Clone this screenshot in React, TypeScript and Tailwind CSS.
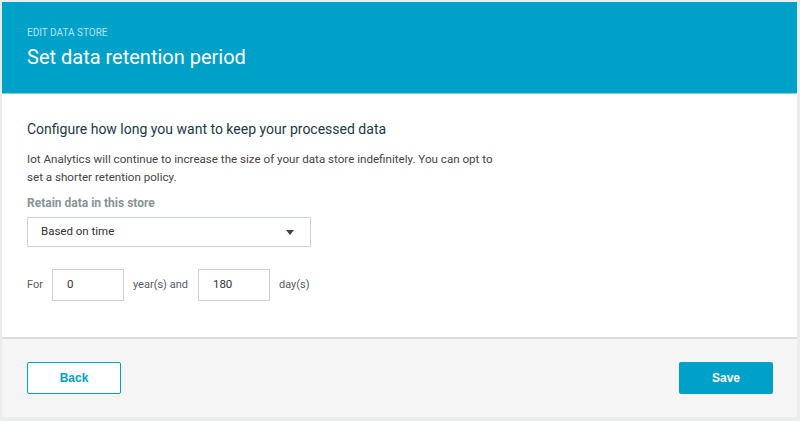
import React from 'react';

const sans = { fontFamily: 'Roboto, "Noto Sans", sans-serif' };

export default function App() {
  return (
    <div className="h-[421px] w-[800px] bg-[#eaeded] pl-[2px] pr-[3px] pt-[2px] pb-[4px]" style={sans}>
      <div className="flex h-full flex-col bg-white">
        {/* header */}
        <div className="h-[92px] border-b border-[#7fd3e6] bg-[#00a1c9] px-[25px] pt-[25px]">
          <div className="text-[10px] uppercase leading-[12px] text-[#b3e4f0]">Edit data store</div>
          <h1 className="mt-[5px] text-[20px] leading-[26px] text-white">Set data retention period</h1>
        </div>

        {/* body */}
        <div className="flex-1 px-[25px] pt-[25px]">
          <h2 className="text-[14px] leading-[20px] text-[#1b3a45]">
            Configure how long you want to keep your processed data
          </h2>
          <p className="mt-[11px] w-[475px] text-[11.6px] leading-[18px] text-[#444]">
            Iot Analytics will continue to increase the size of your data store indefinitely. You can opt to
            set a shorter retention policy.
          </p>
          <div className="mt-[10px] text-[12px] font-bold leading-[14px] text-[#879596]">Retain data in this store</div>
          <div className="mt-[7px] flex h-[30px] w-[284px] items-center justify-between border border-[#ccd3d3] px-[13px] text-[11.5px] text-[#333]">
            <span>Based on time</span>
            <svg width="8" height="5" viewBox="0 0 8 5" className="mr-[3px]">
              <path d="M0 0h8L4 5z" fill="#444" />
            </svg>
          </div>
          <div className="mt-[22px] flex items-center text-[11px] text-[#545b64]">
            <span>For</span>
            <div className="ml-[9px] flex h-[32px] w-[72px] items-center border border-[#ccd3d3] px-[14px] text-[11.5px] text-[#333]">0</div>
            <span className="ml-[9px]">year(s) and</span>
            <div className="ml-[10px] flex h-[32px] w-[72px] items-center border border-[#ccd3d3] px-[14px] text-[11.5px] text-[#333]">180</div>
            <span className="ml-[9px]">day(s)</span>
          </div>
        </div>

        {/* footer */}
        <div className="flex h-[80px] items-center justify-between border-t-2 border-[#dcdcdc] bg-[#f5f5f5] pl-[25px] pr-[24px]">
          <button
            className="h-[32px] w-[94px] rounded-[2px] border border-[#00a1c9] bg-white text-[12px] font-bold text-[#00a1c9]"
            style={{ fontFamily: '"Liberation Sans", Arial, sans-serif' }}
          >
            Back
          </button>
          <button
            className="h-[32px] w-[94px] rounded-[2px] bg-[#00a1c9] text-[12px] font-bold text-white"
            style={{ fontFamily: '"Liberation Sans", Arial, sans-serif' }}
          >
            Save
          </button>
        </div>
      </div>
    </div>
  );
}
